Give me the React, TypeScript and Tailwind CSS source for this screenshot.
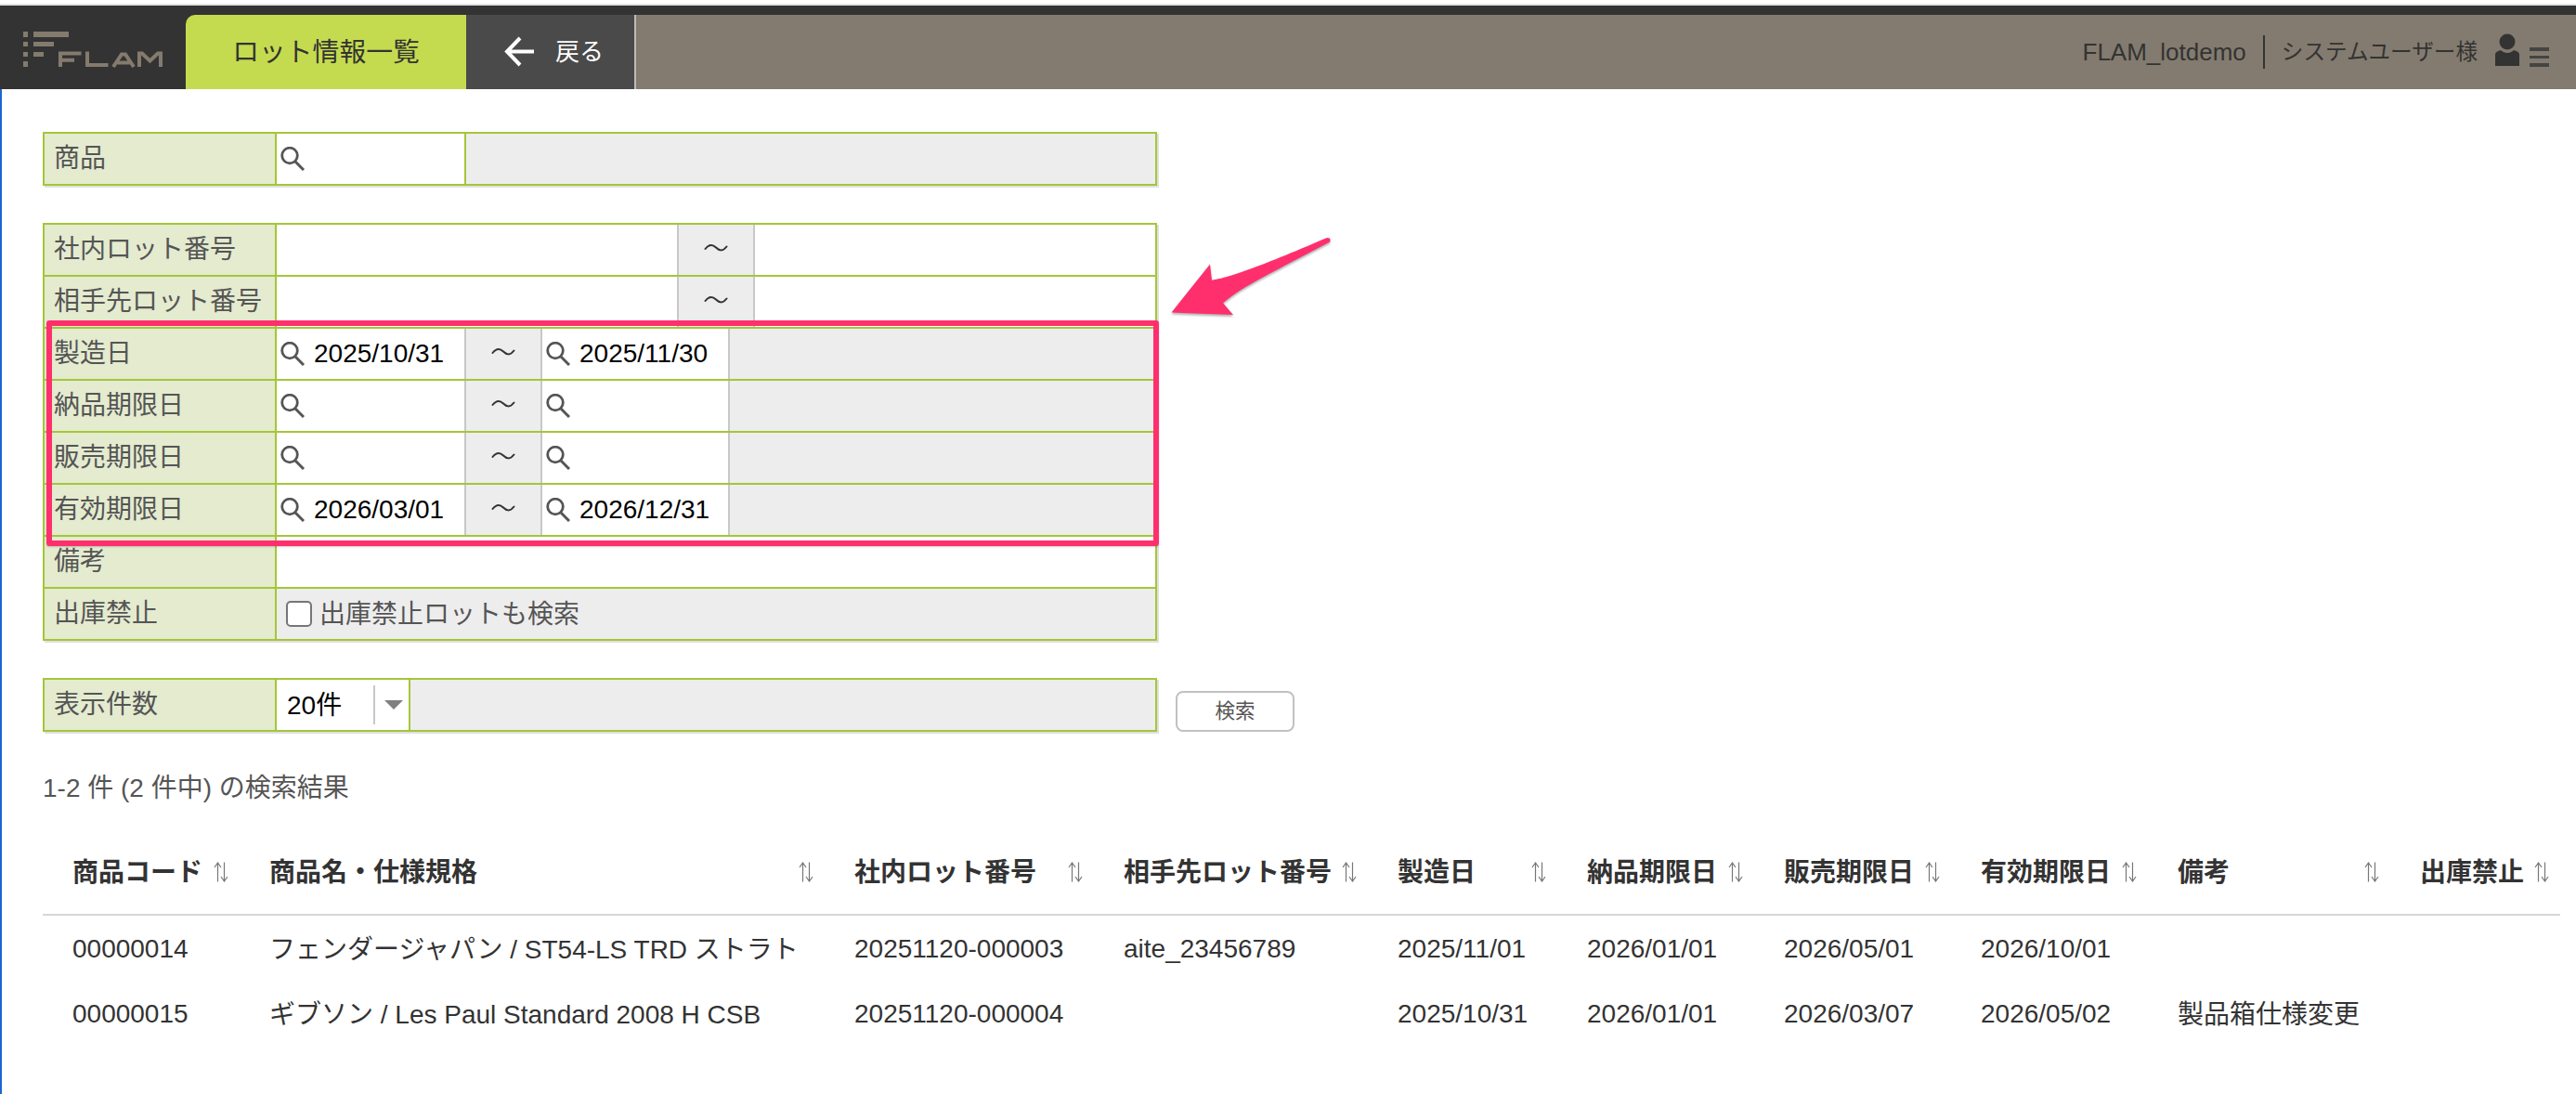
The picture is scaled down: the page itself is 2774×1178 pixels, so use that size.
import React from "react";

const searchRows = [
  { label: "製造日", from: "2025/10/31", to: "2025/11/30" },
  { label: "納品期限日", from: "", to: "" },
  { label: "販売期限日", from: "", to: "" },
  { label: "有効期限日", from: "2026/03/01", to: "2026/12/31" },
];

const columns = [
  "商品コード",
  "商品名・仕様規格",
  "社内ロット番号",
  "相手先ロット番号",
  "製造日",
  "納品期限日",
  "販売期限日",
  "有効期限日",
  "備考",
  "出庫禁止",
];

const lots = [
  ["00000014", "フェンダージャパン / ST54-LS TRD ストラト", "20251120-000003", "aite_23456789", "2025/11/01", "2026/01/01", "2026/05/01", "2026/10/01", "", ""],
  ["00000015", "ギブソン / Les Paul Standard 2008 H CSB", "20251120-000004", "", "2025/10/31", "2026/01/01", "2026/03/07", "2026/05/02", "製品箱仕様変更", ""],
];

const gridCols = "grid grid-cols-[212px_630px_290px_295px_204px_212px_212px_212px_261px_183px]";

function Logo() {
  return (
    <svg width="154" height="42" viewBox="24 32 154 42" fill="none" aria-label="FLAM">
      <g fill="#847b6e">
        <path d="M25 34h5v6h-5zM36 34h38v6H36zM25 45h5v5h-5zM36 45h22v5H36zM25 56h5v5h-5zM36 56h11v5H36zM25 66h5v6h-5z" />
      </g>
      <path
        d="M65 72V57.5H87.500M65 64.700H80M94 55.500V70H116.500M122 72L131 58.500H135L144 72M126.500 67.500H139.500M150 72V57.500H153L161.500 65.500L170 57.500H173V72"
        stroke="#847b6e"
        strokeWidth="4"
      />
    </svg>
  );
}

function SearchIcon() {
  return (
    <svg width="26" height="26" viewBox="0 0 26 26" fill="none" stroke="#555" className="shrink-0">
      <circle cx="10" cy="9.5" r="8.3" strokeWidth="2.8" />
      <path d="M16 16L25 25" strokeWidth="3" />
    </svg>
  );
}

function SortIcon() {
  return (
    <svg width="16" height="22" viewBox="0 0 16 22" fill="none" stroke="#777" strokeWidth="1.2" className="mb-0.5">
      <path d="M4.5 21.500V1M1 6L4.500 1L8 6M11.500 0.500V21M8 16L11.500 21L15 16" />
    </svg>
  );
}

function Label({ children }: { children: React.ReactNode }) {
  return (
    <div className="w-[250px] shrink-0 border-r-2 border-[#a4c639] bg-[#e4ebcf] pl-2.5 leading-[53px]">
      {children}
    </div>
  );
}

function Tilde() {
  return (
    <div className="flex w-[84px] shrink-0 items-center justify-center border-x-2 border-[#c8c8c8] bg-[#ededed]">
      <svg width="26" height="12" viewBox="0 0 26 12" fill="none" stroke="#333" strokeWidth="2" strokeLinecap="round" className="mb-1">
        <path d="M1.500 7C6 1 10 2.500 13 5.500S20 10.500 24.500 4.500" />
      </svg>
    </div>
  );
}

function DateBox({ value }: { value: string }) {
  return (
    <div className="flex h-full w-full items-center bg-white pl-1 text-black">
      <SearchIcon />
      <span className="ml-2.5 leading-[54px]">{value}</span>
    </div>
  );
}

function Header() {
  return (
    <header className="flex h-20 bg-[#837b6f] text-[#333]">
      <div className="-mt-2.5 flex w-[210px] shrink-0 bg-[#333] pt-[26px] pl-6">
        <Logo />
      </div>
      <div className="-ml-2.5 w-[302px] shrink-0 rounded-tl-[10px] bg-[#c5db4f] text-center text-[28.8px] leading-[81px]">
        ロット情報一覧
      </div>
      <div className="flex w-[183px] shrink-0 border-r-2 border-[#bbb] bg-[#4a4a4a] pl-10 text-[26px] leading-[81px] text-white">
        <svg width="34" height="34" viewBox="0 0 34 34" fill="none" stroke="#fff" strokeWidth="4" className="mt-[22px] mr-[22px]">
          <path d="M33 17.5H4M18 3L4 17.5L18 32" />
        </svg>
        戻る
      </div>
      <div className="flex grow justify-end pr-[29px] leading-[80px]">
        <span className="text-[26px]">FLAM_lotdemo</span>
        <span className="mt-[22px] ml-[18px] h-9 w-0.5 bg-[#333]" />
        <span className="ml-[18px] text-[23.6px]">システムユーザー様</span>
        <svg width="28" height="36" viewBox="0 0 28 36" fill="#333" className="mt-5 ml-[18px]">
          <ellipse cx="14" cy="9" rx="8.5" ry="8.5" />
          <path d="M1 35V23c0-3 3-4 6-5 4 4 10 4 14 0 3 1 6 2 6 5v12z" />
        </svg>
        <div className="mt-[35px] ml-2.5 flex w-[21px] flex-col gap-[5px]">
          <span className="h-[3.5px] bg-[#444]" />
          <span className="h-[3.5px] bg-[#444]" />
          <span className="h-[3.5px] bg-[#444]" />
        </div>
      </div>
    </header>
  );
}

export default function App() {
  return (
    <div className="relative h-[1178px] w-[2774px] overflow-hidden bg-white pt-1 font-['Liberation_Sans','Noto_Sans_CJK_JP',sans-serif] text-[28px] text-[#555]">
      <div className="h-0.5 bg-[#dfe3e0]" />
      <div className="h-2.5 bg-[#333]" />
      <Header />
      <main className="h-[1082px] border-l-2 border-[#1b66d2] pt-[46px] pl-11">
        <section className="flex h-[58px] w-[1200px] border-2 border-[#a4c639] bg-[#ededed] shadow-[2px_2px_0_#e0e0e0]">
          <Label>商品</Label>
          <div className="w-[204px] border-r-2 border-[#a4c639]">
            <DateBox value="" />
          </div>
        </section>

        <section className="mt-10 flex h-[450px] w-[1200px] flex-col divide-y-2 divide-[#a4c639] border-2 border-[#a4c639] bg-[#ededed] shadow-[2px_2px_0_#e0e0e0]">
          {["社内ロット番号", "相手先ロット番号"].map((label) => (
            <div key={label} className="flex h-14 shrink-0 bg-white">
              <Label>{label}</Label>
              <div className="w-[431px]" />
              <Tilde />
            </div>
          ))}
          {searchRows.map((row) => (
            <div key={row.label} className="flex h-14 shrink-0">
              <Label>{row.label}</Label>
              <div className="w-[202px]">
                <DateBox value={row.from} />
              </div>
              <Tilde />
              <div className="w-[202px] border-r-2 border-[#c8c8c8]">
                <DateBox value={row.to} />
              </div>
            </div>
          ))}
          <div className="flex h-14 shrink-0 bg-white">
            <Label>備考</Label>
          </div>
          <div className="flex h-[54px] shrink-0">
            <Label>出庫禁止</Label>
            <label className="flex items-center pl-2.5">
              <input type="checkbox" className="size-7 appearance-none rounded-[5px] border-2 border-[#767676] bg-white" />
              <span className="ml-2 leading-[53px]">出庫禁止ロットも検索</span>
            </label>
          </div>
        </section>

        <div className="mt-10 flex">
          <section className="flex h-[58px] w-[1200px] border-2 border-[#a4c639] bg-[#ededed] shadow-[2px_2px_0_#e0e0e0]">
            <Label>表示件数</Label>
            <div className="flex w-36 items-center border-r-2 border-[#a4c639] bg-white pl-[11px] text-black">
              <span className="w-[93px] leading-[53px]">20件</span>
              <span className="h-[42px] w-0.5 bg-[#c8c8c8]" />
              <svg width="20" height="10" viewBox="0 0 20 10" fill="#808080" className="ml-2.5">
                <path d="M0 0h20L10 10z" />
              </svg>
            </div>
          </section>
          <button className="mt-3.5 ml-5 h-11 w-32 rounded-lg border-2 border-[#c1c1c1] bg-white text-[21.5px] leading-[39px]">
            検索
          </button>
        </div>

        <p className="mt-10 leading-[42px]">1-2 件 (2 件中) の検索結果</p>

        <div className="mt-[26px] w-[2711px] text-[#333]">
          <div className={`${gridCols} h-[90px] border-b-2 border-[#d6d6d6] font-bold`}>
            {columns.map((name) => (
              <div key={name} className="flex h-[88px] items-center justify-between pr-3 pl-8 whitespace-nowrap">
                {name}
                <SortIcon />
              </div>
            ))}
          </div>
          {lots.map((lot) => (
            <div key={lot[0]} className={`${gridCols} h-[70px]`}>
              {lot.map((value, i) => (
                <div key={i} className={`pl-8 whitespace-nowrap ${i === 1 || i === 8 ? "leading-[73px]" : "leading-[71px]"}`}>
                  {value}
                </div>
              ))}
            </div>
          ))}
        </div>
      </main>

      {/* highlight around the date filters */}
      <div className="absolute top-[345px] left-[50px] h-[243px] w-[1198px] rounded-[3px] border-6 border-[#ff2f6e] shadow-[0_1px_2px_rgba(0,0,0,0.2)]" />
      <svg width="190" height="104" viewBox="1252 248 190 104" className="absolute top-[248px] left-[1252px] drop-shadow-[0_2px_1px_rgba(0,0,0,0.3)]">
        <path
          d="M1261.5 336.5L1303 284.5L1305 301.7C1322 299 1350 290 1429 256Q1434 256 1432 260.5C1375 291 1338 308 1317 326.3L1328 339z"
          fill="#ff2f6e"
        />
      </svg>
    </div>
  );
}
